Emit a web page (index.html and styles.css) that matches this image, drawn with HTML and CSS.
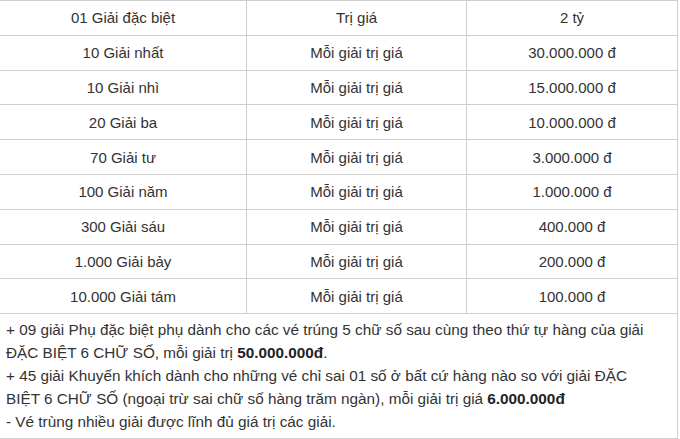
FILE: index.html
```html
<!DOCTYPE html>
<html lang="vi">
<head>
<meta charset="utf-8">
<link rel="stylesheet" href="styles.css">
</head>
<body>
<table class="prizes">
  <colgroup>
    <col class="c1"><col class="c2"><col class="c3">
  </colgroup>
  <tbody>
    <tr><td>01 Giải đặc biệt</td><td>Trị giá</td><td>2 tỷ</td></tr>
    <tr><td>10 Giải nhất</td><td>Mỗi giải trị giá</td><td>30.000.000 đ</td></tr>
    <tr><td>10 Giải nhì</td><td>Mỗi giải trị giá</td><td>15.000.000 đ</td></tr>
    <tr><td>20 Giải ba</td><td>Mỗi giải trị giá</td><td>10.000.000 đ</td></tr>
    <tr><td>70 Giải tư</td><td>Mỗi giải trị giá</td><td>3.000.000 đ</td></tr>
    <tr><td>100 Giải năm</td><td>Mỗi giải trị giá</td><td>1.000.000 đ</td></tr>
    <tr><td>300 Giải sáu</td><td>Mỗi giải trị giá</td><td>400.000 đ</td></tr>
    <tr><td>1.000 Giải bảy</td><td>Mỗi giải trị giá</td><td>200.000 đ</td></tr>
    <tr><td>10.000 Giải tám</td><td>Mỗi giải trị giá</td><td>100.000 đ</td></tr>
    <tr class="notes"><td colspan="3">+ 09 giải Phụ đặc biệt phụ dành cho các vé trúng 5 chữ số sau cùng theo thứ tự hàng của giải<br>ĐẶC BIỆT 6 CHỮ SỐ, mỗi giải trị <b>50.000.000đ</b>.<br>+ 45 giải Khuyến khích dành cho những vé chỉ sai 01 số ở bất cứ hàng nào so với giải ĐẶC<br>BIỆT 6 CHỮ SỐ (ngoại trừ sai chữ số hàng trăm ngàn), mỗi giải trị giá <b>6.000.000đ</b><br>- Vé trùng nhiều giải được lĩnh đủ giá trị các giải.</td></tr>
  </tbody>
</table>
</body>
</html>
```
FILE: styles.css
```css
html, body {
  margin: 0;
  padding: 0;
  background: #fff;
}
body {
  font-family: "Liberation Sans", Arial, sans-serif;
  font-size: 15px;
  color: #333;
}
.prizes {
  border-collapse: collapse;
  table-layout: fixed;
  width: 678px;
  margin-left: -1px;
}
.c1 { width: 247px; }
.c2 { width: 220px; }
.c3 { width: 211px; }
.prizes td {
  border: 1px solid #cfcfcf;
  text-align: center;
  vertical-align: middle;
  padding: 0 4px;
  box-sizing: border-box;
  height: 34.8px;
}
.prizes .notes td {
  text-align: left;
  height: auto;
  padding: 4px 5px 5px 6px;
  font-size: 15.3px;
  line-height: 23px;
}
.prizes b {
  color: #222;
}
```
